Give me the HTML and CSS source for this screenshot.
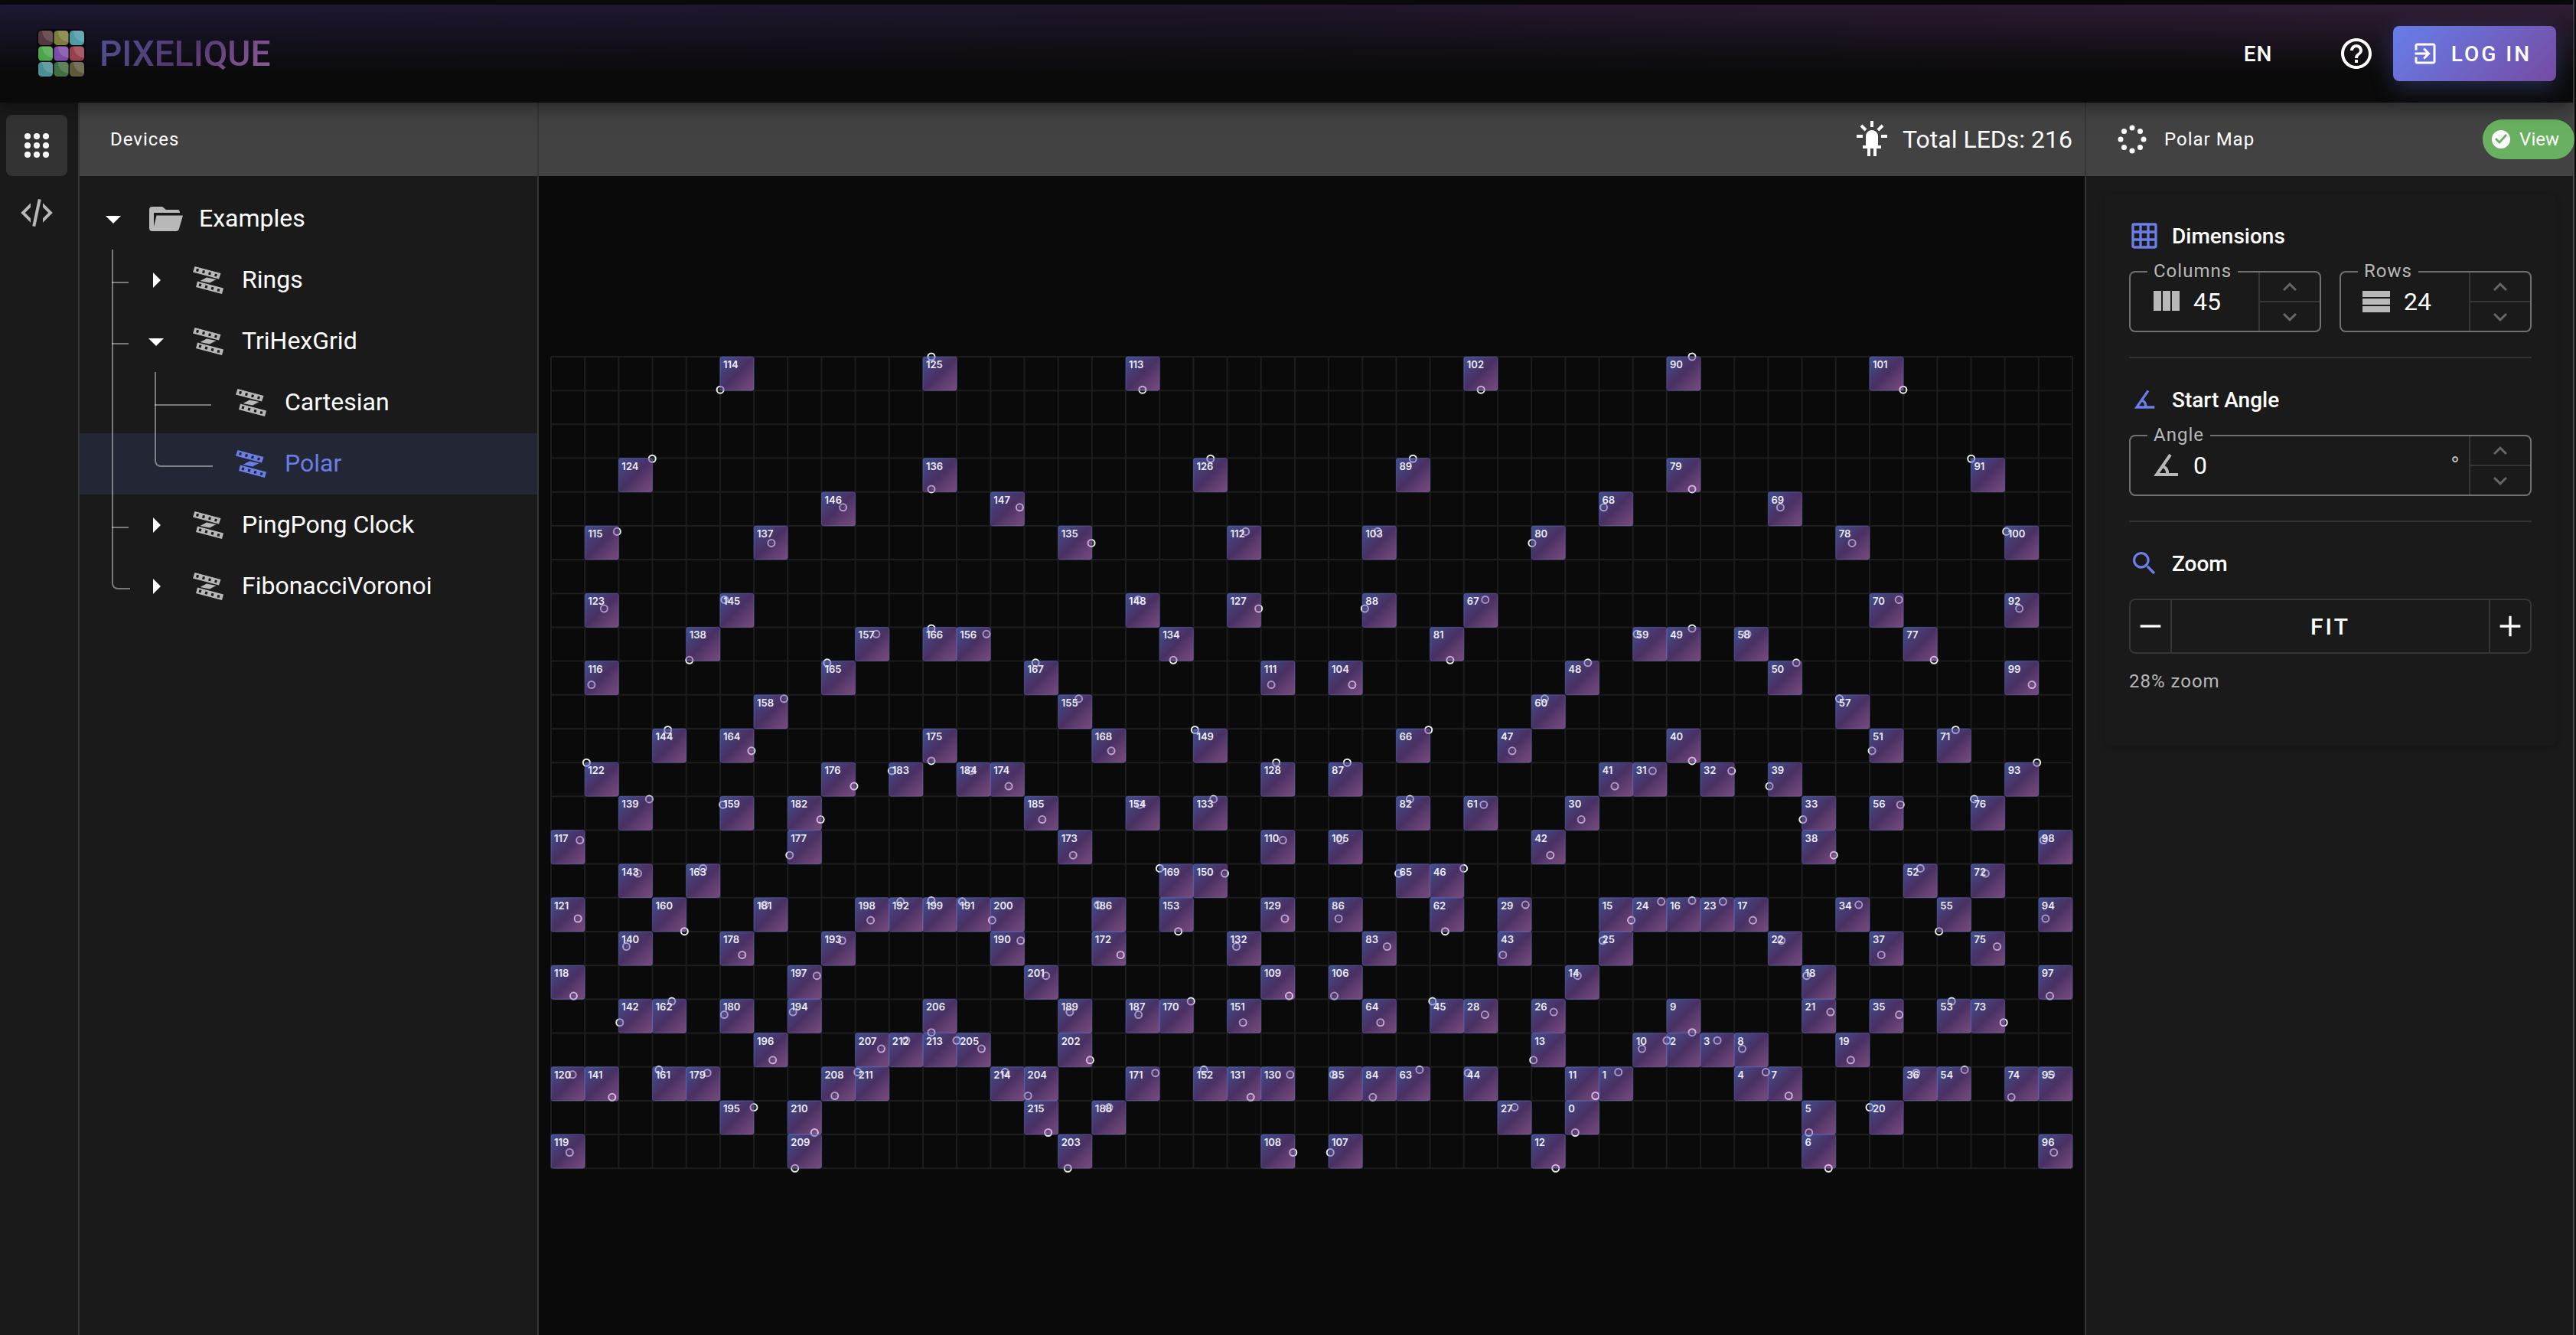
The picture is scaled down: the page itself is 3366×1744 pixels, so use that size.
FILE: index.html
```html
<!DOCTYPE html>
<html lang="en">
  <head>
    <meta charset="UTF-8" />
    <meta name="viewport" content="width=device-width, initial-scale=1.0" />
    <title>Pixelique</title>
    <link rel="stylesheet" href="styles.css">
  </head>
  <body>
    <!-- shared icons -->
    <svg class="sprite" aria-hidden="true">
      <symbol id="i-down" viewBox="0 0 24 24"><path d="M7 10l5 5 5-5z" /></symbol>
      <symbol id="i-right" viewBox="0 0 24 24"><path d="M10 17l5-5-5-5z" /></symbol>
      <symbol id="i-strip" viewBox="0 0 48 48">
        <path fill-rule="evenodd" d="M6.5 6 40.5 15 38 22.5 4 13.5zM9 8.8 8 12.2 11 13 12 9.6zM17 11 16 14.4 19 15.2 20 11.8zM25 13.2 24 16.6 27 17.4 28 14zM33 15.4 32 18.8 35 19.6 36 16.2z" />
        <path fill-rule="evenodd" d="M10 25.5 44 34.5 42 42 8 33zM12.5 28.3 11.5 31.7 14.5 32.5 15.5 29.1zM20.5 30.5 19.5 33.9 22.5 34.7 23.5 31.3zM28.5 32.7 27.5 36.1 30.5 36.9 31.5 33.5zM36.5 34.9 35.5 38.3 38.5 39.1 39.5 35.7z" />
        <path d="M13.5 25 22 20.5 34.5 23 26 27.5z" />
      </symbol>
      <symbol id="i-angle" viewBox="0 0 24 24"><path d="M20,19H4.09L14.18,4.43L15.82,5.57L11.28,12.13C12.89,12.96 14,14.62 14,16.54C14,16.7 14,16.85 13.97,17H20V19M7.91,17H11.96C12,16.85 12,16.7 12,16.54C12,15.28 11.24,14.22 10.14,13.73L7.91,17Z" /></symbol>
      <symbol id="i-up-chevron" viewBox="0 0 24 24"><path d="M7.41 15.41 12 10.83l4.59 4.58L18 14l-6-6-6 6z" /></symbol>
      <symbol id="i-down-chevron" viewBox="0 0 24 24"><path d="M7.41 8.59 12 13.17l4.59-4.58L18 10l-6 6-6-6z" /></symbol>
    </svg>

    <div class="page">
      <header class="header">
        <a href="#" class="brand">
          <svg class="brand-logo" viewBox="0 0 64 64" aria-hidden="true">
            <rect x="0" y="0" width="64" height="64" rx="7" fill="#07070c" />
            <g id="logo-tiles"></g>
          </svg>
          <span class="brand-name">PIXELIQUE</span>
        </a>
        <nav class="header-actions">
          <button type="button" class="btn-lang">EN</button>
          <button type="button" class="btn-icon" aria-label="Help">
            <svg class="icon" viewBox="0 0 24 24"><path d="M11 18h2v-2h-2v2zm1-16C6.48 2 2 6.48 2 12s4.48 10 10 10 10-4.48 10-10S17.52 2 12 2zm0 18c-4.41 0-8-3.59-8-8s3.59-8 8-8 8 3.59 8 8-3.59 8-8 8zm0-14c-2.21 0-4 1.79-4 4h2c0-1.1.9-2 2-2s2 .9 2 2c0 2-3 1.75-3 5h2c0-2.25 3-2.5 3-5 0-2.21-1.79-4-4-4z" /></svg>
          </button>
          <button type="button" class="btn-login">
            <svg class="icon-small" viewBox="0 0 24 24"><path d="M10.09 15.59 11.5 17l5-5-5-5-1.41 1.41L12.67 11H3v2h9.67l-2.58 2.59zM19 3H5c-1.11 0-2 .9-2 2v4h2V5h14v14H5v-4H3v4c0 1.1.89 2 2 2h14c1.1 0 2-.9 2-2V5c0-1.1-.9-2-2-2z" /></svg>
            LOG IN
          </button>
        </nav>
      </header>

      <div class="workspace">
        <nav class="rail">
          <button type="button" class="rail-btn active" aria-label="Devices">
            <svg class="icon" viewBox="0 0 48 48">
              <circle cx="12" cy="12" r="4" /><circle cx="24" cy="12" r="4" /><circle cx="36" cy="12" r="4" />
              <circle cx="12" cy="24" r="4" /><circle cx="24" cy="24" r="4" /><circle cx="36" cy="24" r="4" />
              <circle cx="12" cy="36" r="4" /><circle cx="24" cy="36" r="4" /><circle cx="36" cy="36" r="4" />
            </svg>
          </button>
          <button type="button" class="rail-btn" aria-label="Code">
            <svg class="icon" viewBox="0 0 24 24"><path d="M12.89,3L14.85,3.4L11.11,21L9.15,20.6L12.89,3M19.59,12L16,8.41V5.58L22.42,12L16,18.41V15.58L19.59,12M1.58,12L8,5.58V8.41L4.41,12L8,15.58V18.41L1.58,12Z" /></svg>
          </button>
        </nav>

        <aside class="devices">
          <h2 class="bar bar-title">Devices</h2>
          <ul class="tree">
            <li>
              <a href="#" class="node">
                <svg class="icon arrow"><use href="#i-down" /></svg>
                <svg class="icon kind" viewBox="0 0 48 48"><path d="M7 8h13l5 4h15q3 0 3 4H9v18l3.5-14.5H47L42 37q-1 3-4 3H7q-4 0-4-4V12q0-4 4-4z" /></svg>
                <span class="name">Examples</span>
              </a>
              <ul>
                <li>
                  <a href="#" class="node">
                    <svg class="icon arrow"><use href="#i-right" /></svg>
                    <svg class="icon kind"><use href="#i-strip" /></svg>
                    <span class="name">Rings</span>
                  </a>
                </li>
                <li>
                  <a href="#" class="node">
                    <svg class="icon arrow"><use href="#i-down" /></svg>
                    <svg class="icon kind"><use href="#i-strip" /></svg>
                    <span class="name">TriHexGrid</span>
                  </a>
                  <ul>
                    <li class="leaf">
                      <a href="#" class="node">
                        <span class="arrow"></span>
                        <svg class="icon kind"><use href="#i-strip" /></svg>
                        <span class="name">Cartesian</span>
                      </a>
                    </li>
                    <li class="leaf">
                      <a href="#" class="node selected">
                        <span class="arrow"></span>
                        <svg class="icon kind"><use href="#i-strip" /></svg>
                        <span class="name">Polar</span>
                      </a>
                    </li>
                  </ul>
                </li>
                <li>
                  <a href="#" class="node">
                    <svg class="icon arrow"><use href="#i-right" /></svg>
                    <svg class="icon kind"><use href="#i-strip" /></svg>
                    <span class="name">PingPong Clock</span>
                  </a>
                </li>
                <li>
                  <a href="#" class="node">
                    <svg class="icon arrow"><use href="#i-right" /></svg>
                    <svg class="icon kind"><use href="#i-strip" /></svg>
                    <span class="name">FibonacciVoronoi</span>
                  </a>
                </li>
              </ul>
            </li>
          </ul>
        </aside>

        <main class="stage">
          <div class="bar stage-bar">
            <svg class="icon" viewBox="0 0 24 24"><path d="M11,0V4H13V0H11M18.3,2.29L15.24,5.29L16.64,6.71L19.7,3.71L18.3,2.29M5.71,2.29L4.29,3.71L7.29,6.71L8.71,5.29L5.71,2.29M12,6A4,4 0 0,0 8,10V16H6V18H9V23H11V18H13V23H15V18H18V16H16V10A4,4 0 0,0 12,6M2,9V11H6V9H2M18,9V11H22V9H18Z" /></svg>
            <span>Total LEDs: 216</span>
          </div>
          <div class="map">
            <svg id="led-map" viewBox="0 0 1980 1056" role="img" aria-label="Polar map">
              <defs>
                <linearGradient id="led-fill" x1="0" y1="0" x2="1" y2="1">
                  <stop offset="0" stop-color="#667eea" stop-opacity="0.6" />
                  <stop offset="0.5" stop-color="#764ba2" stop-opacity="0.58" />
                  <stop offset="1" stop-color="#f093fb" stop-opacity="0.47" />
                </linearGradient>
              </defs>
            </svg>
          </div>
        </main>

        <aside class="settings">
          <div class="bar settings-bar">
            <svg class="icon" viewBox="0 0 48 48">
              <circle cx="24" cy="9" r="3.5" /><circle cx="34.5" cy="13.5" r="3.5" /><circle cx="39" cy="24" r="3.5" /><circle cx="34.5" cy="34.5" r="3.5" />
              <circle cx="24" cy="39" r="3.5" /><circle cx="13.5" cy="34.5" r="3.5" /><circle cx="9" cy="24" r="3.5" /><circle cx="13.5" cy="13.5" r="3.5" />
            </svg>
            <h2 class="bar-title">Polar Map</h2>
            <button type="button" class="chip">
              <svg class="icon-chip" viewBox="0 0 24 24"><path d="M12 0a12 12 0 1 0 0 24 12 12 0 0 0 0-24zM10 18l-6-6 2-2 4 4 8-9 2 2z" /></svg>
              View
            </button>
          </div>

          <form class="card">
            <section>
              <h3>
                <svg class="icon-head" viewBox="0 0 24 24"><path fill-rule="evenodd" d="M4 2h16a2 2 0 0 1 2 2v16a2 2 0 0 1-2 2H4a2 2 0 0 1-2-2V4a2 2 0 0 1 2-2zM4 4v4h4V4zM10 4v4h4V4zM16 4v4h4V4zM4 10v4h4v-4zM10 10v4h4v-4zM16 10v4h4v-4zM4 16v4h4v-4zM10 16v4h4v-4zM16 16v4h4v-4z" /></svg>
                Dimensions
              </h3>
              <div class="fields">
                <div class="field">
                  <label for="columns">Columns</label>
                  <svg class="icon" viewBox="0 0 24 24"><path d="M10 18h5V5h-5v13zm-6 0h5V5H4v13zM16 5v13h5V5h-5z" /></svg>
                  <input type="number" id="columns" value="45" />
                  <div class="spin">
                    <button type="button" aria-label="More columns"><svg class="icon-small"><use href="#i-up-chevron" /></svg></button>
                    <button type="button" aria-label="Fewer columns"><svg class="icon-small"><use href="#i-down-chevron" /></svg></button>
                  </div>
                </div>
                <div class="field">
                  <label for="rows">Rows</label>
                  <svg class="icon" viewBox="0 0 24 24"><path d="M3 5h18v4H3zM3 10h18v4H3zM3 15h18v4H3z" /></svg>
                  <input type="number" id="rows" value="24" />
                  <div class="spin">
                    <button type="button" aria-label="More rows"><svg class="icon-small"><use href="#i-up-chevron" /></svg></button>
                    <button type="button" aria-label="Fewer rows"><svg class="icon-small"><use href="#i-down-chevron" /></svg></button>
                  </div>
                </div>
              </div>
            </section>

            <section>
              <h3>
                <svg class="icon-head"><use href="#i-angle" /></svg>
                Start Angle
              </h3>
              <div class="fields">
                <div class="field">
                  <label for="angle">Angle</label>
                  <svg class="icon"><use href="#i-angle" /></svg>
                  <input type="number" id="angle" value="0" />
                  <span class="unit">°</span>
                  <div class="spin">
                    <button type="button" aria-label="Increase angle"><svg class="icon-small"><use href="#i-up-chevron" /></svg></button>
                    <button type="button" aria-label="Decrease angle"><svg class="icon-small"><use href="#i-down-chevron" /></svg></button>
                  </div>
                </div>
              </div>
            </section>

            <section>
              <h3>
                <svg class="icon-head" viewBox="0 0 24 24"><path d="M9.5,3A6.5,6.5 0 0,1 16,9.5C16,11.11 15.41,12.59 14.44,13.73L14.71,14H15.5L20.5,19L19,20.5L14,15.5V14.71L13.73,14.44C12.59,15.41 11.11,16 9.5,16A6.5,6.5 0 0,1 3,9.5A6.5,6.5 0 0,1 9.5,3M9.5,5C7,5 5,7 5,9.5C5,12 7,14 9.5,14C12,14 14,12 14,9.5C14,7 12,5 9.5,5Z" /></svg>
                Zoom
              </h3>
              <div class="zoom">
                <button type="button" aria-label="Zoom out"><svg class="icon-head" viewBox="0 0 24 24"><path d="M20 13H4v-2h16z" /></svg></button>
                <button type="button" class="zoom-fit">FIT</button>
                <button type="button" aria-label="Zoom in"><svg class="icon-head" viewBox="0 0 24 24"><path d="M20 13h-7v7h-2v-7H4v-2h7V4h2v7h7z" /></svg></button>
              </div>
              <p class="hint">28% zoom</p>
            </section>
          </form>
        </aside>
      </div>
    </div>

    <script src="map.js"></script>
  </body>
</html>
```

FILE: styles.css
```css
:root {
  --primary: #6a7ee6;
  --bg: #0a0a0a;
  --panel: #1a1a1a;
  --bar: #424242;
  --line: #363636;
  --muted: #b8b8b8;
}

* {
  margin: 0;
  padding: 0;
  box-sizing: border-box;
}

body {
  background: var(--bg);
  color: #fff;
  font-family: Roboto, "Liberation Sans", sans-serif;
  font-size: 32px;
}

button,
input {
  font: inherit;
  color: inherit;
  background: none;
  border: none;
}

button {
  cursor: pointer;
}

a {
  color: inherit;
  text-decoration: none;
}

ul {
  list-style: none;
}

svg {
  display: block;
  flex: none;
  fill: currentColor;
}

.sprite {
  position: absolute;
  width: 0;
  height: 0;
}

.icon {
  width: 48px;
  height: 48px;
}

.icon-head {
  width: 40px;
  height: 40px;
}

.icon-small {
  width: 36px;
  height: 36px;
}

.icon-chip {
  width: 24px;
  height: 24px;
}

.page {
  display: flex;
  flex-direction: column;
  min-height: 100vh;
  margin-right: 2px;
  border-right: 2px solid #4a4a4a;
}

/* header */
.header {
  display: flex;
  justify-content: space-between;
  align-items: center;
  height: 128px;
  margin-top: 6px;
  padding: 0 22px 0 48px;
  background: linear-gradient(to bottom, rgba(10, 10, 10, 0), #0a0a0a 70%),
    linear-gradient(90deg, #1d1834, #20152a 50%, #311e36);
  box-shadow: 0 4px 24px rgba(0, 0, 0, 0.5);
  position: relative;
  z-index: 1;
}

.brand {
  display: flex;
  align-items: center;
  gap: 18px;
}

.brand-logo {
  width: 64px;
  height: 64px;
}

.brand-name {
  font-size: 46px;
  font-weight: 500;
  line-height: 64px;
  background: linear-gradient(135deg, #4d5498 0%, #54386f 50%, #94609e 100%);
  background-clip: text;
  -webkit-background-clip: text;
  color: transparent;
}

.header-actions {
  display: flex;
  align-items: center;
  gap: 8px;
}

.btn-lang {
  width: 160px;
  height: 72px;
  font-size: 28px;
  font-weight: 500;
  letter-spacing: 1px;
}

.btn-icon {
  display: grid;
  place-items: center;
  width: 80px;
  height: 80px;
}

.btn-login {
  display: flex;
  align-items: center;
  gap: 16px;
  height: 72px;
  padding: 0 32px 0 24px;
  border-radius: 8px;
  background: linear-gradient(135deg, #667eea 0%, #764ba2 100%);
  box-shadow: 0 8px 30px rgba(102, 126, 234, 0.3);
  font-size: 28px;
  font-weight: 500;
  letter-spacing: 3px;
}

/* layout */
.workspace {
  flex: 1;
  display: grid;
  grid-template-columns: 104px 600px minmax(0, 1fr) 638px;
}

.rail {
  display: flex;
  flex-direction: column;
  gap: 8px;
  padding: 16px 14px 16px 8px;
  background: var(--panel);
  border-right: 2px solid var(--line);
}

.rail-btn {
  display: grid;
  place-items: center;
  height: 80px;
  border-radius: 8px;
  color: var(--muted);
}

.rail-btn.active {
  background: #333;
  color: #fff;
}

.bar {
  display: flex;
  align-items: center;
  height: 96px;
  background: var(--bar);
}

.bar-title {
  font-size: 24px;
  font-weight: 400;
  letter-spacing: 1px;
}

/* device tree */
.devices {
  background: var(--panel);
  border-right: 2px solid var(--line);
  overflow: hidden;
}

.devices .bar-title {
  padding-left: 40px;
}

.tree {
  padding-top: 16px;
}

.node {
  display: flex;
  align-items: center;
  gap: 20px;
  height: 80px;
  padding-left: 20px;
}

.arrow {
  width: 48px;
}

.kind {
  color: var(--muted);
}

.name {
  padding-bottom: 2px;
}

.selected,
.selected .kind {
  color: var(--primary);
}

.tree ul {
  padding-left: 56px;
}

/* row highlight runs the full width of the panel */
.selected {
  margin-left: -112px;
  padding-left: 132px;
  background: rgba(102, 126, 234, 0.13);
}

.tree li li {
  position: relative;
}

/* connector lines */
.tree li li::before,
.tree li li::after {
  content: "";
  position: absolute;
  top: 0;
  left: -14px;
}

.tree li li::before {
  width: 22px;
  height: 42px;
  border-bottom: 2px solid rgba(255, 255, 255, 0.42);
}

.tree li li.leaf::before {
  width: 74px;
}

.tree li li::after {
  height: 100%;
  border-left: 2px solid rgba(255, 255, 255, 0.42);
}

.tree li li:last-child::before {
  border-left: 2px solid rgba(255, 255, 255, 0.42);
  border-bottom-left-radius: 8px;
}

.tree li li:last-child::after {
  display: none;
}

/* led map */
.stage {
  display: flex;
  flex-direction: column;
}

.stage-bar {
  justify-content: flex-end;
  gap: 16px;
  padding-right: 16px;
}

.map {
  flex: 1;
  display: flex;
  align-items: center;
  padding: 18px 16px 0;
}

#led-map {
  width: 100%;
  overflow: visible;
}

.grid-line {
  stroke: #1d1d1d;
  stroke-width: 2;
}

.led-ring {
  fill: none;
  stroke: #eee;
  stroke-width: 2;
}

.led-ring-label {
  fill: #4f8a52;
  font-size: 4px;
  text-anchor: middle;
}

.led-cell {
  fill: url(#led-fill);
  stroke: #5a6fd0;
  stroke-opacity: 0.4;
  stroke-width: 1;
}

.led-label {
  fill: #ececf4;
  font-family: Inter, Roboto, sans-serif;
  font-size: 13px;
  font-weight: 600;
}

/* settings */
.settings {
  background: var(--panel);
  border-left: 2px solid var(--line);
}

.settings-bar {
  padding-left: 36px;
}

.settings-bar .bar-title {
  flex: 1;
  padding-left: 18px;
}

.chip {
  display: flex;
  align-items: center;
  gap: 12px;
  height: 52px;
  margin-right: -2px;
  padding: 0 20px 0 12px;
  border-radius: 26px;
  background: #69b060;
  font-size: 24px;
  position: relative;
}

.card {
  margin: 24px 22px 24px 24px;
  padding: 32px 32px 64px;
  border-radius: 8px;
  box-shadow: 0 2px 8px rgba(0, 0, 0, 0.2);
}

.card section + section {
  margin-top: 32px;
  padding-top: 32px;
  border-top: 2px solid #333;
}

.card h3 {
  display: flex;
  align-items: center;
  gap: 16px;
  height: 44px;
  margin-bottom: 24px;
  font-size: 28px;
  font-weight: 500;
}

.card h3 svg {
  color: var(--primary);
}

.fields {
  display: flex;
  gap: 24px;
}

.field {
  flex: 1;
  display: flex;
  align-items: center;
  gap: 12px;
  min-width: 0;
  height: 80px;
  padding-left: 22px;
  border: 2px solid #707070;
  border-radius: 8px;
  position: relative;
}

.field > .icon {
  color: var(--muted);
}

.field label {
  position: absolute;
  top: -16px;
  left: 22px;
  padding: 0 8px;
  background: var(--panel);
  color: var(--muted);
  font-size: 24px;
  line-height: 28px;
  letter-spacing: 1px;
}

.field input {
  flex: 1;
  min-width: 0;
  outline: none;
  appearance: textfield;
  -moz-appearance: textfield;
}

.field input::-webkit-inner-spin-button {
  appearance: none;
  -webkit-appearance: none;
}

.unit {
  color: var(--muted);
}

.spin {
  display: flex;
  flex-direction: column;
  width: 80px;
  height: 100%;
  border-left: 2px solid var(--line);
  color: #666;
}

.spin button {
  flex: 1;
  display: grid;
  place-items: center;
}

.spin button + button {
  border-top: 2px solid var(--line);
}

.zoom {
  display: flex;
  height: 72px;
  border: 2px solid var(--line);
  border-radius: 8px;
}

.zoom button {
  display: grid;
  place-items: center;
  width: 52px;
}

.zoom .zoom-fit {
  flex: 1;
  border: solid var(--line);
  border-width: 0 2px;
  font-size: 30px;
  font-weight: 500;
  letter-spacing: 3px;
}

.hint {
  margin-top: 16px;
  color: var(--muted);
  font-size: 24px;
  line-height: 40px;
  letter-spacing: 1px;
}
```

FILE: map.js
```js
const SVG_NS = "http://www.w3.org/2000/svg";
const COLUMNS = 45;
const ROWS = 24;
const CELL = 44;

// [angle in degrees, distance from the rim in %, LEDs at a, 180-a, 180+a, 360-a]
const leds = [
  [90, 0, 125, null, 90],
  [40.05, 4.07, 114, 113, 102, 101],
  [23.95, 12.57, 124, 126, 89, 91],
  [90, 16.31, 136, null, 79],
  [69.1, 18.56, 146, 147, 68, 69],
  [15.63, 21.54, 115, 112, 103, 100],
  [52.14, 22.96, 137, 135, 80, 78],
  [41.07, 29.94, 145, 148, 67, 70],
  [12.56, 31.03, 123, 127, 88, 92],
  [90, 33.48, 166, null, 49],
  [76.96, 34.17, 157, 156, 59, 58],
  [32.75, 37.38, 138, 134, 81, 77],
  [65.34, 37.71, 165, 167, 48, 50],
  [9.58, 40.42, 116, 111, 104, 99],
  [55.13, 42.14, 158, 155, 60, 57],
  [27.64, 45.98, 144, 149, 66, 71],
  [47.43, 48.56, 164, 168, 47, 51],
  [90, 49.79, 175, null, 40],
  [8.4, 50.01, 122, 128, 87, 93],
  [80.65, 51.03, 183, 184, 31, 32],
  [71.7, 52.92, 176, 174, 41, 39],
  [23.24, 54.51, 139, 133, 82, 76],
  [40.7, 55.2, 159, 154, 61, 56],
  [63.77, 57.02, 182, 185, 30, 33],
  [6.83, 59.57, 117, 110, 105, 98],
  [56.46, 61.42, 177, 173, 42, 38],
  [35.97, 63.04, 163, 169, 46, 52],
  [20.57, 63.67, 143, 150, 65, 72],
  [90, 67.01, 199, null, 16],
  [82.69, 67.14, 192, 191, 24, 23],
  [50.57, 67.54, 181, 186, 29, 34],
  [6.36, 69.23, 121, 129, 86, 94],
  [75.62, 69.43, 198, 200, 15, 17],
  [31.57, 70.8, 160, 153, 62, 55],
  [68.87, 71.94, 193, 190, 25, 22],
  [17.83, 72.67, 140, 132, 83, 75],
  [45.23, 73.7, 178, 172, 43, 37],
  [62.9, 76.27, 197, 201, 14, 18],
  [5.34, 78.76, 118, 109, 106, 97],
  [28.58, 79.42, 162, 170, 45, 53],
  [57.25, 80.74, 194, 189, 26, 21],
  [40.99, 81.07, 180, 187, 28, 35],
  [16.26, 82.03, 142, 151, 64, 73],
  [90, 83.25, 206, null, 9],
  [84.02, 84.25, 212, 213, 2, 3],
  [78.14, 85.27, 207, 205, 10, 8],
  [52.46, 86.66, 196, 202, 13, 19],
  [25.52, 87.85, 161, 152, 63, 54],
  [72.56, 88.15, 211, 214, 1, 4],
  [36.99, 88.25, 179, 171, 44, 36],
  [5.1, 88.45, 120, 130, 85, 95],
  [67.14, 91.06, 208, 204, 11, 7],
  [14.45, 91.23, 141, 131, 84, 74],
  [47.98, 92.48, 195, 188, 27, 20],
  [62.35, 95.59, 210, 215, 0, 5],
  [4.4, 98.04, 119, 108, 107, 96],
  [57.72, 100, 209, 203, 12, 6],
];

const map = document.getElementById("led-map");

function draw(parent, tag, attrs, text) {
  const node = document.createElementNS(SVG_NS, tag);
  for (const key in attrs) node.setAttribute(key, attrs[key]);
  if (text !== undefined) node.textContent = text;
  parent.appendChild(node);
}

// Grid
const width = COLUMNS * CELL;
const height = ROWS * CELL;
for (let c = 0; c <= COLUMNS; c++) {
  draw(map, "line", { class: "grid-line", x1: c * CELL, y1: 0, x2: c * CELL, y2: height });
}
for (let r = 0; r <= ROWS; r++) {
  draw(map, "line", { class: "grid-line", x1: 0, y1: r * CELL, x2: width, y2: r * CELL });
}

const points = [];
leds.forEach(([a, d, ...ids]) => {
  [a, 180 - a, 180 + a, 360 - a].forEach((angle, i) => {
    if (ids[i] === null || ids[i] === undefined) return;
    points.push({ id: ids[i], x: (angle / 360) * width, y: (d / 100) * height });
  });
});

// Exact positions sit below the translucent cells
points.forEach(({ id, x, y }) => {
  draw(map, "circle", { class: "led-ring", cx: x, cy: y, r: 4.5 });
  draw(map, "text", { class: "led-ring-label", x: x, y: y + 1.5 }, id);
});

points.forEach(({ id, x, y }) => {
  const left = Math.floor(x / CELL) * CELL;
  const top = Math.min(Math.floor(y / CELL), ROWS - 1) * CELL;
  draw(map, "rect", { class: "led-cell", x: left, y: top, width: CELL, height: CELL, rx: 3 });
  draw(map, "text", { class: "led-label", x: left + 4, y: top + 15 }, id);
});

// Logo tiles
const tiles = [
  "#54373f", "#7f7d3c", "#4f9ba6",
  "#4da549", "#7d4ca6", "#99404f",
  "#4a8f95", "#3f6f40", "#5c5a3a",
];
const logo = document.getElementById("logo-tiles");
tiles.forEach((color, i) => {
  const x = 2 + (i % 3) * 20.5;
  const y = 2 + Math.floor(i / 3) * 20.5;
  draw(logo, "rect", { x, y, width: 19, height: 19, rx: 4.5, fill: color });
  draw(logo, "path", {
    d: `M${x + 5} ${y}H${x + 15}Q${x + 19} ${y} ${x + 19} ${y + 4}V${y + 15}Q${x + 6} ${y + 13} ${x + 5} ${y}z`,
    fill: "#fff",
    "fill-opacity": 0.15,
  });
});
```
